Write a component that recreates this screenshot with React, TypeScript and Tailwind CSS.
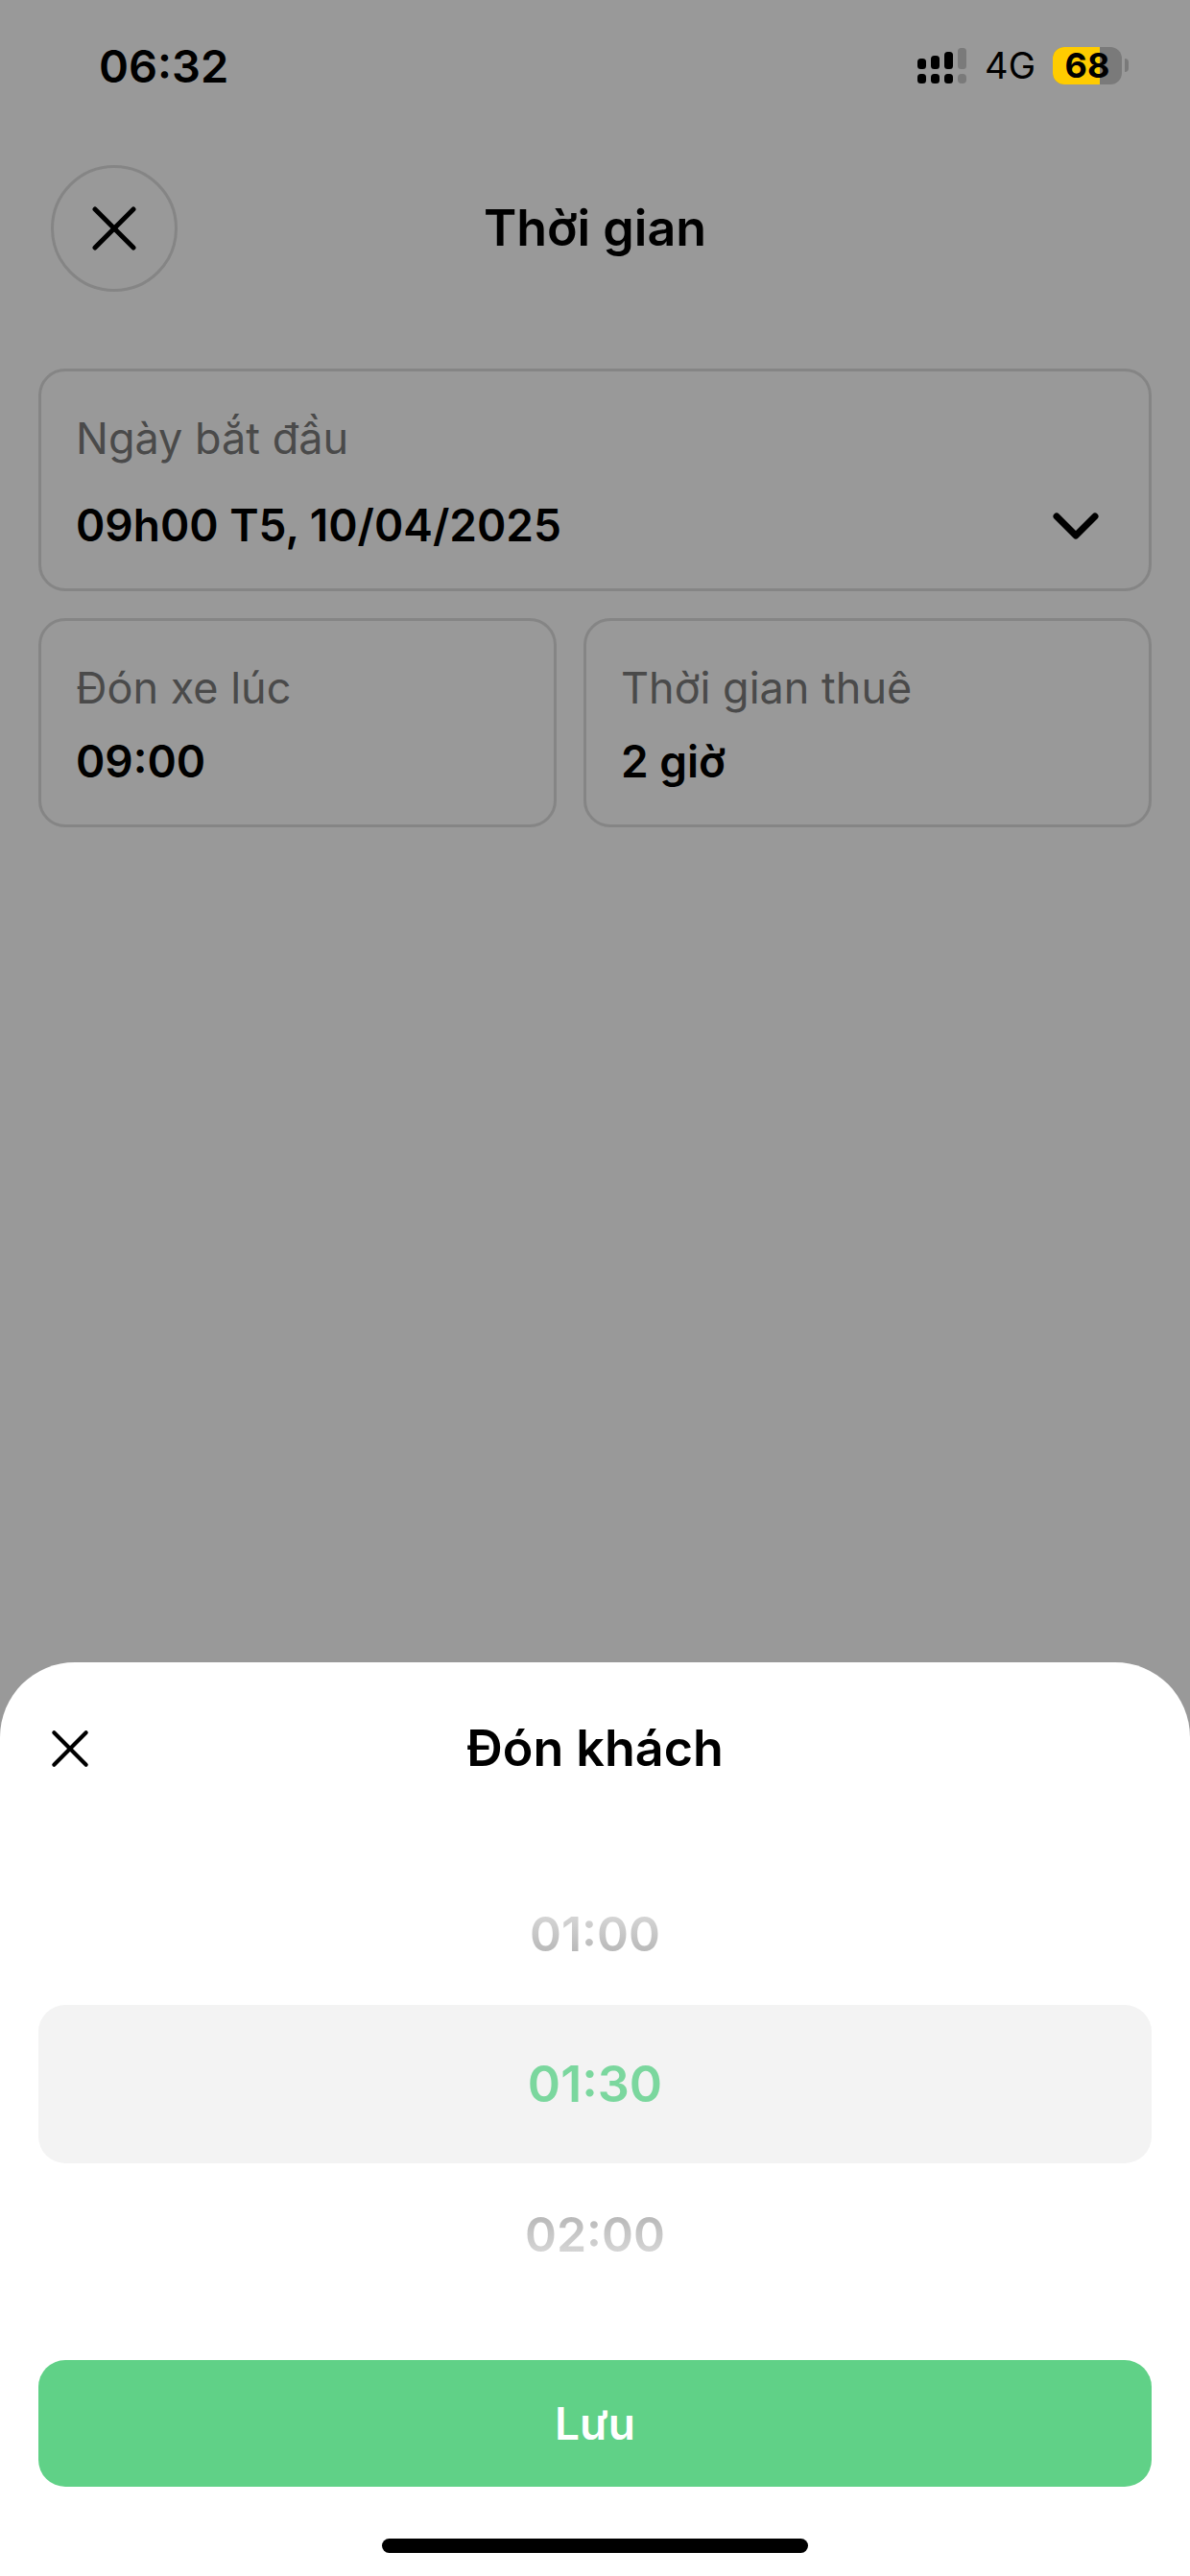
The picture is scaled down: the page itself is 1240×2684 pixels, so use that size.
import { useState } from "react"
import clsx from "clsx"

type FieldCardProps = {
  label: string
  value: string
  className?: string
  chevron?: boolean
}

const TIMES = ["01:00", "01:30", "02:00"]

function CloseIcon({ className }: { className?: string }) {
  return (
    <svg viewBox="0 0 48 48" fill="none" stroke="currentColor" strokeLinecap="round" className={className} aria-hidden="true">
      <path d="M4 4L44 44M44 4L4 44" />
    </svg>
  )
}

function SignalIcon() {
  return (
    <svg viewBox="0 0 52 38" className="h-[38px] w-[52px]" aria-hidden="true">
      <rect x="0" y="12" width="9" height="11" rx="3.5" />
      <rect x="14" y="9" width="9" height="14" rx="3.5" />
      <rect x="28" y="5" width="9" height="18" rx="3.5" />
      <rect x="0" y="28" width="9" height="10" rx="3.5" />
      <rect x="14" y="28" width="9" height="10" rx="3.5" />
      <rect x="28" y="28" width="9" height="10" rx="3.5" />
      <rect x="42" y="1" width="9" height="22" rx="3.5" fill="#7a7a7a" />
      <rect x="42" y="28" width="9" height="10" rx="4" fill="#7a7a7a" />
    </svg>
  )
}

function Battery({ level }: { level: number }) {
  return (
    <div className="flex items-center gap-[3px]">
      <div className="relative flex h-[39px] w-[72px] items-center justify-center">
        <div className="absolute inset-0 overflow-hidden rounded-xl bg-[#7a7a7a]">
          <div className="h-full bg-[#ffcc00]" style={{ width: `${level}%` }} />
        </div>
        <span className="relative text-[36px] leading-[39px] font-bold">{level}</span>
      </div>
      <div className="h-3.5 w-1 rounded-r-full bg-[#7a7a7a]" />
    </div>
  )
}

function StatusBar() {
  return (
    <div className="flex h-[136px] items-center justify-between pr-16 pl-[103px]">
      <span className="text-[47px] leading-none font-semibold">06:32</span>
      <div className="flex items-center gap-[18px]">
        <SignalIcon />
        <span className="text-[38px] leading-none">4G</span>
        <Battery level={68} />
      </div>
    </div>
  )
}

function FieldCard({ label, value, className, chevron }: FieldCardProps) {
  return (
    <button
      type="button"
      className={clsx("flex flex-col rounded-[28px] border-3 border-[#858585] px-9 pt-[42px] pb-[38px] text-left leading-[56px]", className)}
    >
      <span className="text-[45px] text-[#4a4a4a]">{label}</span>
      <span className="flex w-full items-center justify-between text-[46px] font-semibold">
        {value}
        {chevron ? (
          <svg
            viewBox="0 0 48 30"
            fill="none"
            stroke="currentColor"
            strokeWidth="7"
            strokeLinecap="round"
            strokeLinejoin="round"
            className="mr-4 h-[30px] w-12"
            aria-hidden="true"
          >
            <path d="M4 6L24 26L44 6" />
          </svg>
        ) : null}
      </span>
    </button>
  )
}

function TimePicker() {
  const [selected, setSelected] = useState("01:30")

  return (
    <div role="listbox" aria-label="Đón khách" className="flex flex-col text-[52px] leading-none font-semibold">
      {TIMES.map((time, index) => (
        <button
          key={time}
          type="button"
          role="option"
          aria-selected={time === selected}
          onClick={() => setSelected(time)}
          className={clsx(
            "flex items-center justify-center",
            time === selected ? "h-[165px] rounded-[28px] bg-[#f3f3f3] text-[#7bd79e]" : "h-[148px] text-[50px]",
          )}
        >
          {time === selected ? (
            time
          ) : (
            <span
              className={clsx(
                "from-[#dadada] to-[#b4b4b4] bg-clip-text text-transparent",
                index === 0 ? "bg-linear-to-b" : "bg-linear-to-t",
              )}
            >
              {time}
            </span>
          )}
        </button>
      ))}
    </div>
  )
}

function PickupSheet() {
  return (
    <section className="mt-auto flex flex-col rounded-t-[78px] bg-white px-10 pb-6">
      <header className="grid h-[180px] grid-cols-[1fr_auto_1fr] items-center">
        <button type="button" aria-label="Đóng" className="ml-[9px] size-12 justify-self-start">
          <CloseIcon className="size-full p-1 stroke-[5px]" />
        </button>
        <h2 className="text-[52px] leading-none font-semibold">Đón khách</h2>
      </header>
      <div className="mt-[29px]">
        <TimePicker />
      </div>
      <button
        type="button"
        className="mt-[57px] h-[132px] rounded-[28px] bg-[#60d187] text-[46px] leading-none font-semibold text-white"
      >
        Lưu
      </button>
      <div className="mt-[54px] h-[15px] w-[444px] self-center rounded-full bg-black" />
    </section>
  )
}

export default function App() {
  return (
    <main className="flex min-h-screen flex-col bg-[#999999] font-['Inter',sans-serif] text-black">
      <StatusBar />
      <header className="grid grid-cols-[1fr_auto_1fr] items-center px-[53px] pt-9">
        <button
          type="button"
          aria-label="Đóng"
          className="flex size-[132px] items-center justify-center rounded-full border-3 border-[#858585]"
        >
          <CloseIcon className="size-12 stroke-[5px]" />
        </button>
        <h1 className="text-[52px] leading-none font-semibold">Thời gian</h1>
      </header>
      <div className="flex flex-col gap-7 px-10 pt-20 pb-20">
        <FieldCard label="Ngày bắt đầu" value="09h00 T5, 10/04/2025" chevron className="gap-[34px]" />
        <div className="grid grid-cols-[540fr_592fr] gap-7">
          <FieldCard label="Đón xe lúc" value="09:00" className="gap-5" />
          <FieldCard label="Thời gian thuê" value="2 giờ" className="gap-5" />
        </div>
      </div>
      <PickupSheet />
    </main>
  )
}
